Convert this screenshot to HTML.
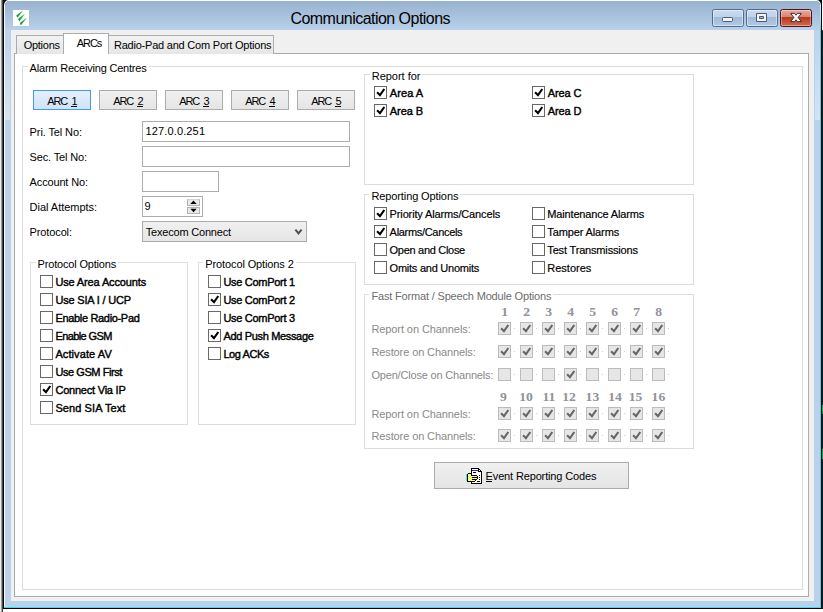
<!DOCTYPE html>
<html><head><meta charset="utf-8"><title>Communication Options</title>
<style>
html,body{margin:0;padding:0;background:#fff;}
body{width:823px;height:612px;position:relative;overflow:hidden;font-family:"Liberation Sans",sans-serif;}
#r div{position:absolute;}
svg{position:absolute;left:0;top:0;}
svg text{font-family:"Liberation Sans",sans-serif;white-space:pre;}
svg text.b{stroke:#000;stroke-width:.4px;}
svg text.m{stroke:#000;stroke-width:.18px;}
svg text.n{font-family:"Liberation Serif",serif;font-weight:bold;}
</style></head><body>
<div id="r">

<div style="left:0;top:0;width:823px;height:612px;background:#fff;"></div>
<div style="left:0;top:0;width:1px;height:612px;background:#ececec;"></div>
<div style="left:1px;top:0;width:1px;height:612px;background:#9c9c9c;"></div>
<div style="left:2px;top:0;width:1px;height:612px;background:#484848;"></div>
<div style="left:3px;top:0;width:819px;height:609px;background:#000;"></div>
<div style="left:4px;top:0;width:817px;height:608px;background:#b9d1ea;"></div>
<div style="left:4px;top:1px;width:817px;height:29px;background:linear-gradient(#97b2d0,#b9d1ea);"></div>
<div style="left:4px;top:0;width:817px;height:1px;background:#fff;"></div>
<div style="left:5px;top:30px;width:5px;height:90px;background:linear-gradient(rgba(255,255,255,.04),rgba(255,255,255,.4));"></div>
<div style="left:815px;top:30px;width:5px;height:90px;background:linear-gradient(rgba(255,255,255,.04),rgba(255,255,255,.4));"></div>
<div style="left:4px;top:1px;width:1px;height:606px;background:#f8fbfe;"></div>
<div style="left:820px;top:1px;width:1px;height:606px;background:#3cd8fa;"></div>
<div style="left:820px;top:1px;width:1px;height:30px;background:linear-gradient(#d0f6ff,#a8ecfd 50%,#3cd8fa);"></div>
<div style="left:822px;top:0;width:1px;height:30px;background:#fff;"></div>
<div style="left:822px;top:30px;width:1px;height:579px;background:#1c1c1c;"></div>
<div style="left:822px;top:405px;width:1px;height:9px;background:#18a048;"></div>
<div style="left:822px;top:449px;width:1px;height:10px;background:#18a048;"></div>
<div style="left:4px;top:607px;width:817px;height:1px;background:#38dcf8;"></div>

<div style="left:11px;top:30px;width:803px;height:571px;background:#f0f0f0;"></div>
<div style="left:14px;top:53px;width:795px;height:544px;background:#fff;border:1px solid #acacac;box-sizing:border-box;"></div>
<div style="left:16px;top:35px;width:48px;height:19px;background:linear-gradient(#f2f2f2,#e6e6e6);border:1px solid #acacac;border-bottom:none;box-sizing:border-box;"></div>
<div style="left:108px;top:35px;width:166px;height:19px;background:linear-gradient(#f2f2f2,#e6e6e6);border:1px solid #acacac;border-bottom:none;box-sizing:border-box;"></div>
<div style="left:63px;top:33px;width:46px;height:21px;background:#fff;border:1px solid #acacac;border-bottom:none;box-sizing:border-box;"></div>
<div style="left:22px;top:66px;width:781px;height:524px;border:1px solid #dcdcdc;box-sizing:border-box;"></div>
<div style="left:27.6px;top:66px;width:121.1px;height:1px;background:#fff;"></div>
<div style="left:33px;top:90px;width:58px;height:20px;background:linear-gradient(#e4f0fc,#cfe3f8);border:1px solid #4698ee;box-sizing:border-box;"></div>
<div style="left:71px;top:106px;width:6px;height:1px;background:#000;"></div>
<div style="left:99px;top:90px;width:58px;height:20px;background:linear-gradient(#f0f0f0,#e5e5e5);border:1px solid #acacac;box-sizing:border-box;"></div>
<div style="left:137px;top:106px;width:6px;height:1px;background:#000;"></div>
<div style="left:165px;top:90px;width:58px;height:20px;background:linear-gradient(#f0f0f0,#e5e5e5);border:1px solid #acacac;box-sizing:border-box;"></div>
<div style="left:203px;top:106px;width:6px;height:1px;background:#000;"></div>
<div style="left:231px;top:90px;width:58px;height:20px;background:linear-gradient(#f0f0f0,#e5e5e5);border:1px solid #acacac;box-sizing:border-box;"></div>
<div style="left:269px;top:106px;width:6px;height:1px;background:#000;"></div>
<div style="left:297px;top:90px;width:58px;height:20px;background:linear-gradient(#f0f0f0,#e5e5e5);border:1px solid #acacac;box-sizing:border-box;"></div>
<div style="left:335px;top:106px;width:6px;height:1px;background:#000;"></div>
<div style="left:142px;top:121px;width:208px;height:21px;background:#fff;border:1px solid #abadb3;box-sizing:border-box;"></div>
<div style="left:142px;top:146px;width:208px;height:21px;background:#fff;border:1px solid #abadb3;box-sizing:border-box;"></div>
<div style="left:142px;top:171px;width:77px;height:21px;background:#fff;border:1px solid #abadb3;box-sizing:border-box;"></div>
<div style="left:142px;top:196px;width:61px;height:21px;background:#fff;border:1px solid #abadb3;box-sizing:border-box;"></div>
<div style="left:187px;top:199px;width:13px;height:7px;background:#e9e9e9;border:1px solid #b2b2b2;border-top-color:#d4d4d4;box-sizing:border-box;"></div>
<div style="left:187px;top:207px;width:13px;height:7px;background:#e9e9e9;border:1px solid #b2b2b2;box-sizing:border-box;"></div>
<div style="left:142px;top:221px;width:165px;height:21px;background:linear-gradient(#f0f0f0,#e5e5e5);border:1px solid #acacac;box-sizing:border-box;"></div>
<div style="left:30px;top:262px;width:158px;height:163px;border:1px solid #dcdcdc;box-sizing:border-box;"></div>
<div style="left:35.6px;top:262px;width:82.6px;height:1px;background:#fff;"></div>
<div style="left:40px;top:275px;width:13px;height:13px;background:#fff;border:1px solid #686868;box-sizing:border-box;"></div>
<div style="left:40px;top:293px;width:13px;height:13px;background:#fff;border:1px solid #686868;box-sizing:border-box;"></div>
<div style="left:40px;top:311px;width:13px;height:13px;background:#fff;border:1px solid #686868;box-sizing:border-box;"></div>
<div style="left:40px;top:329px;width:13px;height:13px;background:#fff;border:1px solid #686868;box-sizing:border-box;"></div>
<div style="left:40px;top:347px;width:13px;height:13px;background:#fff;border:1px solid #686868;box-sizing:border-box;"></div>
<div style="left:40px;top:365px;width:13px;height:13px;background:#fff;border:1px solid #686868;box-sizing:border-box;"></div>
<div style="left:40px;top:383px;width:13px;height:13px;background:#fff;border:1px solid #686868;box-sizing:border-box;"></div>
<div style="left:40px;top:401px;width:13px;height:13px;background:#fff;border:1px solid #686868;box-sizing:border-box;"></div>
<div style="left:198px;top:262px;width:158px;height:163px;border:1px solid #dcdcdc;box-sizing:border-box;"></div>
<div style="left:203.3px;top:262px;width:92.5px;height:1px;background:#fff;"></div>
<div style="left:208px;top:275px;width:13px;height:13px;background:#fff;border:1px solid #686868;box-sizing:border-box;"></div>
<div style="left:208px;top:293px;width:13px;height:13px;background:#fff;border:1px solid #686868;box-sizing:border-box;"></div>
<div style="left:208px;top:311px;width:13px;height:13px;background:#fff;border:1px solid #686868;box-sizing:border-box;"></div>
<div style="left:208px;top:329px;width:13px;height:13px;background:#fff;border:1px solid #686868;box-sizing:border-box;"></div>
<div style="left:208px;top:347px;width:13px;height:13px;background:#fff;border:1px solid #686868;box-sizing:border-box;"></div>
<div style="left:364px;top:74px;width:330px;height:111px;border:1px solid #dcdcdc;box-sizing:border-box;"></div>
<div style="left:369.7px;top:74px;width:52.80000000000001px;height:1px;background:#fff;"></div>
<div style="left:374px;top:86px;width:13px;height:13px;background:#fff;border:1px solid #686868;box-sizing:border-box;"></div>
<div style="left:374px;top:104px;width:13px;height:13px;background:#fff;border:1px solid #686868;box-sizing:border-box;"></div>
<div style="left:532px;top:86px;width:13px;height:13px;background:#fff;border:1px solid #686868;box-sizing:border-box;"></div>
<div style="left:532px;top:104px;width:13px;height:13px;background:#fff;border:1px solid #686868;box-sizing:border-box;"></div>
<div style="left:364px;top:194px;width:330px;height:91px;border:1px solid #dcdcdc;box-sizing:border-box;"></div>
<div style="left:369.4px;top:194px;width:91.0px;height:1px;background:#fff;"></div>
<div style="left:374px;top:207px;width:13px;height:13px;background:#fff;border:1px solid #686868;box-sizing:border-box;"></div>
<div style="left:374px;top:225px;width:13px;height:13px;background:#fff;border:1px solid #686868;box-sizing:border-box;"></div>
<div style="left:374px;top:243px;width:13px;height:13px;background:#fff;border:1px solid #686868;box-sizing:border-box;"></div>
<div style="left:374px;top:261px;width:13px;height:13px;background:#fff;border:1px solid #686868;box-sizing:border-box;"></div>
<div style="left:532px;top:207px;width:13px;height:13px;background:#fff;border:1px solid #686868;box-sizing:border-box;"></div>
<div style="left:532px;top:225px;width:13px;height:13px;background:#fff;border:1px solid #686868;box-sizing:border-box;"></div>
<div style="left:532px;top:243px;width:13px;height:13px;background:#fff;border:1px solid #686868;box-sizing:border-box;"></div>
<div style="left:532px;top:261px;width:13px;height:13px;background:#fff;border:1px solid #686868;box-sizing:border-box;"></div>
<div style="left:364px;top:294px;width:330px;height:155px;border:1px solid #dcdcdc;box-sizing:border-box;"></div>
<div style="left:369.4px;top:294px;width:184.10000000000002px;height:1px;background:#fff;"></div>
<div style="left:498px;top:322px;width:13px;height:13px;background:#e6e6e6;border:1px solid #bcbcbc;box-sizing:border-box;"></div>
<div style="left:514px;top:328px;width:1px;height:1px;background:#c8c8ee;"></div>
<div style="left:520px;top:322px;width:13px;height:13px;background:#e6e6e6;border:1px solid #bcbcbc;box-sizing:border-box;"></div>
<div style="left:536px;top:328px;width:1px;height:1px;background:#c8c8ee;"></div>
<div style="left:542px;top:322px;width:13px;height:13px;background:#e6e6e6;border:1px solid #bcbcbc;box-sizing:border-box;"></div>
<div style="left:558px;top:328px;width:1px;height:1px;background:#c8c8ee;"></div>
<div style="left:564px;top:322px;width:13px;height:13px;background:#e6e6e6;border:1px solid #bcbcbc;box-sizing:border-box;"></div>
<div style="left:580px;top:328px;width:1px;height:1px;background:#c8c8ee;"></div>
<div style="left:586px;top:322px;width:13px;height:13px;background:#e6e6e6;border:1px solid #bcbcbc;box-sizing:border-box;"></div>
<div style="left:602px;top:328px;width:1px;height:1px;background:#c8c8ee;"></div>
<div style="left:608px;top:322px;width:13px;height:13px;background:#e6e6e6;border:1px solid #bcbcbc;box-sizing:border-box;"></div>
<div style="left:624px;top:328px;width:1px;height:1px;background:#c8c8ee;"></div>
<div style="left:630px;top:322px;width:13px;height:13px;background:#e6e6e6;border:1px solid #bcbcbc;box-sizing:border-box;"></div>
<div style="left:646px;top:328px;width:1px;height:1px;background:#c8c8ee;"></div>
<div style="left:652px;top:322px;width:13px;height:13px;background:#e6e6e6;border:1px solid #bcbcbc;box-sizing:border-box;"></div>
<div style="left:668px;top:328px;width:1px;height:1px;background:#c8c8ee;"></div>
<div style="left:498px;top:345px;width:13px;height:13px;background:#e6e6e6;border:1px solid #bcbcbc;box-sizing:border-box;"></div>
<div style="left:514px;top:351px;width:1px;height:1px;background:#c8c8ee;"></div>
<div style="left:520px;top:345px;width:13px;height:13px;background:#e6e6e6;border:1px solid #bcbcbc;box-sizing:border-box;"></div>
<div style="left:536px;top:351px;width:1px;height:1px;background:#c8c8ee;"></div>
<div style="left:542px;top:345px;width:13px;height:13px;background:#e6e6e6;border:1px solid #bcbcbc;box-sizing:border-box;"></div>
<div style="left:558px;top:351px;width:1px;height:1px;background:#c8c8ee;"></div>
<div style="left:564px;top:345px;width:13px;height:13px;background:#e6e6e6;border:1px solid #bcbcbc;box-sizing:border-box;"></div>
<div style="left:580px;top:351px;width:1px;height:1px;background:#c8c8ee;"></div>
<div style="left:586px;top:345px;width:13px;height:13px;background:#e6e6e6;border:1px solid #bcbcbc;box-sizing:border-box;"></div>
<div style="left:602px;top:351px;width:1px;height:1px;background:#c8c8ee;"></div>
<div style="left:608px;top:345px;width:13px;height:13px;background:#e6e6e6;border:1px solid #bcbcbc;box-sizing:border-box;"></div>
<div style="left:624px;top:351px;width:1px;height:1px;background:#c8c8ee;"></div>
<div style="left:630px;top:345px;width:13px;height:13px;background:#e6e6e6;border:1px solid #bcbcbc;box-sizing:border-box;"></div>
<div style="left:646px;top:351px;width:1px;height:1px;background:#c8c8ee;"></div>
<div style="left:652px;top:345px;width:13px;height:13px;background:#e6e6e6;border:1px solid #bcbcbc;box-sizing:border-box;"></div>
<div style="left:668px;top:351px;width:1px;height:1px;background:#c8c8ee;"></div>
<div style="left:498px;top:368px;width:13px;height:13px;background:#e6e6e6;border:1px solid #bcbcbc;box-sizing:border-box;"></div>
<div style="left:514px;top:374px;width:1px;height:1px;background:#c8c8ee;"></div>
<div style="left:520px;top:368px;width:13px;height:13px;background:#e6e6e6;border:1px solid #bcbcbc;box-sizing:border-box;"></div>
<div style="left:536px;top:374px;width:1px;height:1px;background:#c8c8ee;"></div>
<div style="left:542px;top:368px;width:13px;height:13px;background:#e6e6e6;border:1px solid #bcbcbc;box-sizing:border-box;"></div>
<div style="left:558px;top:374px;width:1px;height:1px;background:#c8c8ee;"></div>
<div style="left:564px;top:368px;width:13px;height:13px;background:#e6e6e6;border:1px solid #bcbcbc;box-sizing:border-box;"></div>
<div style="left:580px;top:374px;width:1px;height:1px;background:#c8c8ee;"></div>
<div style="left:586px;top:368px;width:13px;height:13px;background:#e6e6e6;border:1px solid #bcbcbc;box-sizing:border-box;"></div>
<div style="left:602px;top:374px;width:1px;height:1px;background:#c8c8ee;"></div>
<div style="left:608px;top:368px;width:13px;height:13px;background:#e6e6e6;border:1px solid #bcbcbc;box-sizing:border-box;"></div>
<div style="left:624px;top:374px;width:1px;height:1px;background:#c8c8ee;"></div>
<div style="left:630px;top:368px;width:13px;height:13px;background:#e6e6e6;border:1px solid #bcbcbc;box-sizing:border-box;"></div>
<div style="left:646px;top:374px;width:1px;height:1px;background:#c8c8ee;"></div>
<div style="left:652px;top:368px;width:13px;height:13px;background:#e6e6e6;border:1px solid #bcbcbc;box-sizing:border-box;"></div>
<div style="left:668px;top:374px;width:1px;height:1px;background:#c8c8ee;"></div>
<div style="left:498px;top:407px;width:13px;height:13px;background:#e6e6e6;border:1px solid #bcbcbc;box-sizing:border-box;"></div>
<div style="left:514px;top:413px;width:1px;height:1px;background:#c8c8ee;"></div>
<div style="left:520px;top:407px;width:13px;height:13px;background:#e6e6e6;border:1px solid #bcbcbc;box-sizing:border-box;"></div>
<div style="left:536px;top:413px;width:1px;height:1px;background:#c8c8ee;"></div>
<div style="left:542px;top:407px;width:13px;height:13px;background:#e6e6e6;border:1px solid #bcbcbc;box-sizing:border-box;"></div>
<div style="left:558px;top:413px;width:1px;height:1px;background:#c8c8ee;"></div>
<div style="left:564px;top:407px;width:13px;height:13px;background:#e6e6e6;border:1px solid #bcbcbc;box-sizing:border-box;"></div>
<div style="left:580px;top:413px;width:1px;height:1px;background:#c8c8ee;"></div>
<div style="left:586px;top:407px;width:13px;height:13px;background:#e6e6e6;border:1px solid #bcbcbc;box-sizing:border-box;"></div>
<div style="left:602px;top:413px;width:1px;height:1px;background:#c8c8ee;"></div>
<div style="left:608px;top:407px;width:13px;height:13px;background:#e6e6e6;border:1px solid #bcbcbc;box-sizing:border-box;"></div>
<div style="left:624px;top:413px;width:1px;height:1px;background:#c8c8ee;"></div>
<div style="left:630px;top:407px;width:13px;height:13px;background:#e6e6e6;border:1px solid #bcbcbc;box-sizing:border-box;"></div>
<div style="left:646px;top:413px;width:1px;height:1px;background:#c8c8ee;"></div>
<div style="left:652px;top:407px;width:13px;height:13px;background:#e6e6e6;border:1px solid #bcbcbc;box-sizing:border-box;"></div>
<div style="left:668px;top:413px;width:1px;height:1px;background:#c8c8ee;"></div>
<div style="left:498px;top:429px;width:13px;height:13px;background:#e6e6e6;border:1px solid #bcbcbc;box-sizing:border-box;"></div>
<div style="left:514px;top:435px;width:1px;height:1px;background:#c8c8ee;"></div>
<div style="left:520px;top:429px;width:13px;height:13px;background:#e6e6e6;border:1px solid #bcbcbc;box-sizing:border-box;"></div>
<div style="left:536px;top:435px;width:1px;height:1px;background:#c8c8ee;"></div>
<div style="left:542px;top:429px;width:13px;height:13px;background:#e6e6e6;border:1px solid #bcbcbc;box-sizing:border-box;"></div>
<div style="left:558px;top:435px;width:1px;height:1px;background:#c8c8ee;"></div>
<div style="left:564px;top:429px;width:13px;height:13px;background:#e6e6e6;border:1px solid #bcbcbc;box-sizing:border-box;"></div>
<div style="left:580px;top:435px;width:1px;height:1px;background:#c8c8ee;"></div>
<div style="left:586px;top:429px;width:13px;height:13px;background:#e6e6e6;border:1px solid #bcbcbc;box-sizing:border-box;"></div>
<div style="left:602px;top:435px;width:1px;height:1px;background:#c8c8ee;"></div>
<div style="left:608px;top:429px;width:13px;height:13px;background:#e6e6e6;border:1px solid #bcbcbc;box-sizing:border-box;"></div>
<div style="left:624px;top:435px;width:1px;height:1px;background:#c8c8ee;"></div>
<div style="left:630px;top:429px;width:13px;height:13px;background:#e6e6e6;border:1px solid #bcbcbc;box-sizing:border-box;"></div>
<div style="left:646px;top:435px;width:1px;height:1px;background:#c8c8ee;"></div>
<div style="left:652px;top:429px;width:13px;height:13px;background:#e6e6e6;border:1px solid #bcbcbc;box-sizing:border-box;"></div>
<div style="left:668px;top:435px;width:1px;height:1px;background:#c8c8ee;"></div>
<div style="left:434px;top:462px;width:195px;height:27px;background:linear-gradient(#f0f0f0,#e5e5e5);border:1px solid #acacac;box-sizing:border-box;"></div>
<div style="left:486px;top:481px;width:6px;height:1px;background:#000;"></div>
<div style="left:13px;top:10px;width:16px;height:16px;background:#fff;"></div>
<div style="left:712px;top:9px;width:32px;height:18px;border:1px solid #536c8d;border-radius:2.5px;box-sizing:border-box;background:linear-gradient(#c8dbef 0%,#bed3ea 44%,#9fbad9 47%,#b1cae5 100%);box-shadow:inset 0 0 0 1px rgba(255,255,255,.45);"></div>
<div style="left:746px;top:9px;width:32px;height:18px;border:1px solid #536c8d;border-radius:2.5px;box-sizing:border-box;background:linear-gradient(#c8dbef 0%,#bed3ea 44%,#9fbad9 47%,#b1cae5 100%);box-shadow:inset 0 0 0 1px rgba(255,255,255,.45);"></div>
<div style="left:780px;top:9px;width:32px;height:18px;border:1px solid #4a1420;border-radius:2.5px;box-sizing:border-box;background:linear-gradient(#e9ab9e 0%,#d98371 44%,#b8381c 47%,#d4694e 100%);box-shadow:inset 0 0 0 1px rgba(255,255,255,.35);"></div>
</div>
<svg width="823" height="612" viewBox="0 0 823 612">
<path d="M190.3 204 L193.5 200.6 L196.7 204 Z" fill="#000"/>
<path d="M190.3 208.8 L193.5 212.2 L196.7 208.8 Z" fill="#000"/>
<path d="M295.4 229.6 L298.5 233.4 L301.6 229.6" fill="none" stroke="#505050" stroke-width="2"/>
<path d="M43.1 389.2 L46 392.2 L50.3 386" fill="none" stroke="#000" stroke-width="2.1"/>
<path d="M211.1 299.2 L214 302.2 L218.3 296" fill="none" stroke="#000" stroke-width="2.1"/>
<path d="M211.1 335.2 L214 338.2 L218.3 332" fill="none" stroke="#000" stroke-width="2.1"/>
<path d="M377.1 92.2 L380 95.2 L384.3 89" fill="none" stroke="#000" stroke-width="2.1"/>
<path d="M377.1 110.2 L380 113.2 L384.3 107" fill="none" stroke="#000" stroke-width="2.1"/>
<path d="M535.1 92.2 L538 95.2 L542.3 89" fill="none" stroke="#000" stroke-width="2.1"/>
<path d="M535.1 110.2 L538 113.2 L542.3 107" fill="none" stroke="#000" stroke-width="2.1"/>
<path d="M377.1 213.2 L380 216.2 L384.3 210" fill="none" stroke="#000" stroke-width="2.1"/>
<path d="M377.1 231.2 L380 234.2 L384.3 228" fill="none" stroke="#000" stroke-width="2.1"/>
<path d="M501.1 328.2 L504 331.2 L508.3 325" fill="none" stroke="#666" stroke-width="2.1"/>
<path d="M523.1 328.2 L526 331.2 L530.3 325" fill="none" stroke="#666" stroke-width="2.1"/>
<path d="M545.1 328.2 L548 331.2 L552.3 325" fill="none" stroke="#666" stroke-width="2.1"/>
<path d="M567.1 328.2 L570 331.2 L574.3 325" fill="none" stroke="#666" stroke-width="2.1"/>
<path d="M589.1 328.2 L592 331.2 L596.3 325" fill="none" stroke="#666" stroke-width="2.1"/>
<path d="M611.1 328.2 L614 331.2 L618.3 325" fill="none" stroke="#666" stroke-width="2.1"/>
<path d="M633.1 328.2 L636 331.2 L640.3 325" fill="none" stroke="#666" stroke-width="2.1"/>
<path d="M655.1 328.2 L658 331.2 L662.3 325" fill="none" stroke="#666" stroke-width="2.1"/>
<path d="M501.1 351.2 L504 354.2 L508.3 348" fill="none" stroke="#666" stroke-width="2.1"/>
<path d="M523.1 351.2 L526 354.2 L530.3 348" fill="none" stroke="#666" stroke-width="2.1"/>
<path d="M545.1 351.2 L548 354.2 L552.3 348" fill="none" stroke="#666" stroke-width="2.1"/>
<path d="M567.1 351.2 L570 354.2 L574.3 348" fill="none" stroke="#666" stroke-width="2.1"/>
<path d="M589.1 351.2 L592 354.2 L596.3 348" fill="none" stroke="#666" stroke-width="2.1"/>
<path d="M611.1 351.2 L614 354.2 L618.3 348" fill="none" stroke="#666" stroke-width="2.1"/>
<path d="M633.1 351.2 L636 354.2 L640.3 348" fill="none" stroke="#666" stroke-width="2.1"/>
<path d="M655.1 351.2 L658 354.2 L662.3 348" fill="none" stroke="#666" stroke-width="2.1"/>
<path d="M567.1 374.2 L570 377.2 L574.3 371" fill="none" stroke="#666" stroke-width="2.1"/>
<path d="M501.1 413.2 L504 416.2 L508.3 410" fill="none" stroke="#666" stroke-width="2.1"/>
<path d="M523.1 413.2 L526 416.2 L530.3 410" fill="none" stroke="#666" stroke-width="2.1"/>
<path d="M545.1 413.2 L548 416.2 L552.3 410" fill="none" stroke="#666" stroke-width="2.1"/>
<path d="M567.1 413.2 L570 416.2 L574.3 410" fill="none" stroke="#666" stroke-width="2.1"/>
<path d="M589.1 413.2 L592 416.2 L596.3 410" fill="none" stroke="#666" stroke-width="2.1"/>
<path d="M611.1 413.2 L614 416.2 L618.3 410" fill="none" stroke="#666" stroke-width="2.1"/>
<path d="M633.1 413.2 L636 416.2 L640.3 410" fill="none" stroke="#666" stroke-width="2.1"/>
<path d="M655.1 413.2 L658 416.2 L662.3 410" fill="none" stroke="#666" stroke-width="2.1"/>
<path d="M501.1 435.2 L504 438.2 L508.3 432" fill="none" stroke="#666" stroke-width="2.1"/>
<path d="M523.1 435.2 L526 438.2 L530.3 432" fill="none" stroke="#666" stroke-width="2.1"/>
<path d="M545.1 435.2 L548 438.2 L552.3 432" fill="none" stroke="#666" stroke-width="2.1"/>
<path d="M567.1 435.2 L570 438.2 L574.3 432" fill="none" stroke="#666" stroke-width="2.1"/>
<path d="M589.1 435.2 L592 438.2 L596.3 432" fill="none" stroke="#666" stroke-width="2.1"/>
<path d="M611.1 435.2 L614 438.2 L618.3 432" fill="none" stroke="#666" stroke-width="2.1"/>
<path d="M633.1 435.2 L636 438.2 L640.3 432" fill="none" stroke="#666" stroke-width="2.1"/>
<path d="M655.1 435.2 L658 438.2 L662.3 432" fill="none" stroke="#666" stroke-width="2.1"/>
<rect x="471" y="468" width="1" height="1" fill="#000" shape-rendering="crispEdges"/>
<rect x="472" y="468" width="1" height="1" fill="#000" shape-rendering="crispEdges"/>
<rect x="473" y="468" width="1" height="1" fill="#000" shape-rendering="crispEdges"/>
<rect x="474" y="468" width="1" height="1" fill="#000" shape-rendering="crispEdges"/>
<rect x="475" y="468" width="1" height="1" fill="#000" shape-rendering="crispEdges"/>
<rect x="476" y="468" width="1" height="1" fill="#000" shape-rendering="crispEdges"/>
<rect x="477" y="468" width="1" height="1" fill="#000" shape-rendering="crispEdges"/>
<rect x="478" y="468" width="1" height="1" fill="#000" shape-rendering="crispEdges"/>
<rect x="471" y="469" width="1" height="1" fill="#000" shape-rendering="crispEdges"/>
<rect x="472" y="469" width="1" height="1" fill="#fff" shape-rendering="crispEdges"/>
<rect x="473" y="469" width="1" height="1" fill="#fff" shape-rendering="crispEdges"/>
<rect x="474" y="469" width="1" height="1" fill="#fff" shape-rendering="crispEdges"/>
<rect x="475" y="469" width="1" height="1" fill="#fff" shape-rendering="crispEdges"/>
<rect x="476" y="469" width="1" height="1" fill="#fff" shape-rendering="crispEdges"/>
<rect x="477" y="469" width="1" height="1" fill="#fff" shape-rendering="crispEdges"/>
<rect x="478" y="469" width="1" height="1" fill="#000" shape-rendering="crispEdges"/>
<rect x="479" y="469" width="1" height="1" fill="#000" shape-rendering="crispEdges"/>
<rect x="471" y="470" width="1" height="1" fill="#000" shape-rendering="crispEdges"/>
<rect x="472" y="470" width="1" height="1" fill="#2424ff" shape-rendering="crispEdges"/>
<rect x="473" y="470" width="1" height="1" fill="#2424ff" shape-rendering="crispEdges"/>
<rect x="474" y="470" width="1" height="1" fill="#2424ff" shape-rendering="crispEdges"/>
<rect x="475" y="470" width="1" height="1" fill="#2424ff" shape-rendering="crispEdges"/>
<rect x="476" y="470" width="1" height="1" fill="#2424ff" shape-rendering="crispEdges"/>
<rect x="477" y="470" width="1" height="1" fill="#2424ff" shape-rendering="crispEdges"/>
<rect x="478" y="470" width="1" height="1" fill="#000" shape-rendering="crispEdges"/>
<rect x="479" y="470" width="1" height="1" fill="#fff" shape-rendering="crispEdges"/>
<rect x="480" y="470" width="1" height="1" fill="#000" shape-rendering="crispEdges"/>
<rect x="471" y="471" width="1" height="1" fill="#000" shape-rendering="crispEdges"/>
<rect x="472" y="471" width="1" height="1" fill="#fff" shape-rendering="crispEdges"/>
<rect x="473" y="471" width="1" height="1" fill="#fff" shape-rendering="crispEdges"/>
<rect x="474" y="471" width="1" height="1" fill="#fff" shape-rendering="crispEdges"/>
<rect x="475" y="471" width="1" height="1" fill="#fff" shape-rendering="crispEdges"/>
<rect x="476" y="471" width="1" height="1" fill="#fff" shape-rendering="crispEdges"/>
<rect x="477" y="471" width="1" height="1" fill="#fff" shape-rendering="crispEdges"/>
<rect x="478" y="471" width="1" height="1" fill="#000" shape-rendering="crispEdges"/>
<rect x="479" y="471" width="1" height="1" fill="#000" shape-rendering="crispEdges"/>
<rect x="480" y="471" width="1" height="1" fill="#000" shape-rendering="crispEdges"/>
<rect x="481" y="471" width="1" height="1" fill="#000" shape-rendering="crispEdges"/>
<rect x="471" y="472" width="1" height="1" fill="#000" shape-rendering="crispEdges"/>
<rect x="472" y="472" width="1" height="1" fill="#fff" shape-rendering="crispEdges"/>
<rect x="473" y="472" width="1" height="1" fill="#000" shape-rendering="crispEdges"/>
<rect x="474" y="472" width="1" height="1" fill="#000" shape-rendering="crispEdges"/>
<rect x="475" y="472" width="1" height="1" fill="#000" shape-rendering="crispEdges"/>
<rect x="476" y="472" width="1" height="1" fill="#fff" shape-rendering="crispEdges"/>
<rect x="477" y="472" width="1" height="1" fill="#fff" shape-rendering="crispEdges"/>
<rect x="478" y="472" width="1" height="1" fill="#fff" shape-rendering="crispEdges"/>
<rect x="479" y="472" width="1" height="1" fill="#fff" shape-rendering="crispEdges"/>
<rect x="480" y="472" width="1" height="1" fill="#fff" shape-rendering="crispEdges"/>
<rect x="481" y="472" width="1" height="1" fill="#000" shape-rendering="crispEdges"/>
<rect x="468" y="473" width="1" height="1" fill="#000" shape-rendering="crispEdges"/>
<rect x="469" y="473" width="1" height="1" fill="#000" shape-rendering="crispEdges"/>
<rect x="470" y="473" width="1" height="1" fill="#000" shape-rendering="crispEdges"/>
<rect x="471" y="473" width="1" height="1" fill="#000" shape-rendering="crispEdges"/>
<rect x="472" y="473" width="1" height="1" fill="#fff" shape-rendering="crispEdges"/>
<rect x="473" y="473" width="1" height="1" fill="#fff" shape-rendering="crispEdges"/>
<rect x="474" y="473" width="1" height="1" fill="#fff" shape-rendering="crispEdges"/>
<rect x="475" y="473" width="1" height="1" fill="#fff" shape-rendering="crispEdges"/>
<rect x="476" y="473" width="1" height="1" fill="#fff" shape-rendering="crispEdges"/>
<rect x="477" y="473" width="1" height="1" fill="#fff" shape-rendering="crispEdges"/>
<rect x="478" y="473" width="1" height="1" fill="#fff" shape-rendering="crispEdges"/>
<rect x="479" y="473" width="1" height="1" fill="#fff" shape-rendering="crispEdges"/>
<rect x="480" y="473" width="1" height="1" fill="#fff" shape-rendering="crispEdges"/>
<rect x="481" y="473" width="1" height="1" fill="#000" shape-rendering="crispEdges"/>
<rect x="466" y="474" width="1" height="1" fill="#28e8fc" shape-rendering="crispEdges"/>
<rect x="467" y="474" width="1" height="1" fill="#000" shape-rendering="crispEdges"/>
<rect x="468" y="474" width="1" height="1" fill="#ffff00" shape-rendering="crispEdges"/>
<rect x="469" y="474" width="1" height="1" fill="#fff" shape-rendering="crispEdges"/>
<rect x="470" y="474" width="1" height="1" fill="#ffff00" shape-rendering="crispEdges"/>
<rect x="471" y="474" width="1" height="1" fill="#000" shape-rendering="crispEdges"/>
<rect x="472" y="474" width="1" height="1" fill="#fff" shape-rendering="crispEdges"/>
<rect x="473" y="474" width="1" height="1" fill="#fff" shape-rendering="crispEdges"/>
<rect x="474" y="474" width="1" height="1" fill="#fff" shape-rendering="crispEdges"/>
<rect x="475" y="474" width="1" height="1" fill="#fff" shape-rendering="crispEdges"/>
<rect x="476" y="474" width="1" height="1" fill="#fff" shape-rendering="crispEdges"/>
<rect x="477" y="474" width="1" height="1" fill="#fff" shape-rendering="crispEdges"/>
<rect x="478" y="474" width="1" height="1" fill="#fff" shape-rendering="crispEdges"/>
<rect x="479" y="474" width="1" height="1" fill="#fff" shape-rendering="crispEdges"/>
<rect x="480" y="474" width="1" height="1" fill="#fff" shape-rendering="crispEdges"/>
<rect x="481" y="474" width="1" height="1" fill="#000" shape-rendering="crispEdges"/>
<rect x="466" y="475" width="1" height="1" fill="#28e8fc" shape-rendering="crispEdges"/>
<rect x="467" y="475" width="1" height="1" fill="#000" shape-rendering="crispEdges"/>
<rect x="468" y="475" width="1" height="1" fill="#fff" shape-rendering="crispEdges"/>
<rect x="469" y="475" width="1" height="1" fill="#ffff00" shape-rendering="crispEdges"/>
<rect x="470" y="475" width="1" height="1" fill="#fff" shape-rendering="crispEdges"/>
<rect x="471" y="475" width="1" height="1" fill="#000" shape-rendering="crispEdges"/>
<rect x="472" y="475" width="1" height="1" fill="#000" shape-rendering="crispEdges"/>
<rect x="473" y="475" width="1" height="1" fill="#000" shape-rendering="crispEdges"/>
<rect x="474" y="475" width="1" height="1" fill="#000" shape-rendering="crispEdges"/>
<rect x="475" y="475" width="1" height="1" fill="#000" shape-rendering="crispEdges"/>
<rect x="476" y="475" width="1" height="1" fill="#000" shape-rendering="crispEdges"/>
<rect x="477" y="475" width="1" height="1" fill="#fff" shape-rendering="crispEdges"/>
<rect x="478" y="475" width="1" height="1" fill="#fff" shape-rendering="crispEdges"/>
<rect x="479" y="475" width="1" height="1" fill="#000" shape-rendering="crispEdges"/>
<rect x="480" y="475" width="1" height="1" fill="#fff" shape-rendering="crispEdges"/>
<rect x="481" y="475" width="1" height="1" fill="#000" shape-rendering="crispEdges"/>
<rect x="466" y="476" width="1" height="1" fill="#28e8fc" shape-rendering="crispEdges"/>
<rect x="467" y="476" width="1" height="1" fill="#000" shape-rendering="crispEdges"/>
<rect x="468" y="476" width="1" height="1" fill="#ffff00" shape-rendering="crispEdges"/>
<rect x="469" y="476" width="1" height="1" fill="#fff" shape-rendering="crispEdges"/>
<rect x="470" y="476" width="1" height="1" fill="#ffff00" shape-rendering="crispEdges"/>
<rect x="471" y="476" width="1" height="1" fill="#fff" shape-rendering="crispEdges"/>
<rect x="472" y="476" width="1" height="1" fill="#ffff00" shape-rendering="crispEdges"/>
<rect x="473" y="476" width="1" height="1" fill="#fff" shape-rendering="crispEdges"/>
<rect x="474" y="476" width="1" height="1" fill="#ffff00" shape-rendering="crispEdges"/>
<rect x="475" y="476" width="1" height="1" fill="#fff" shape-rendering="crispEdges"/>
<rect x="476" y="476" width="1" height="1" fill="#ffff00" shape-rendering="crispEdges"/>
<rect x="477" y="476" width="1" height="1" fill="#000" shape-rendering="crispEdges"/>
<rect x="478" y="476" width="1" height="1" fill="#fff" shape-rendering="crispEdges"/>
<rect x="479" y="476" width="1" height="1" fill="#fff" shape-rendering="crispEdges"/>
<rect x="480" y="476" width="1" height="1" fill="#fff" shape-rendering="crispEdges"/>
<rect x="481" y="476" width="1" height="1" fill="#000" shape-rendering="crispEdges"/>
<rect x="466" y="477" width="1" height="1" fill="#28e8fc" shape-rendering="crispEdges"/>
<rect x="467" y="477" width="1" height="1" fill="#000" shape-rendering="crispEdges"/>
<rect x="468" y="477" width="1" height="1" fill="#fff" shape-rendering="crispEdges"/>
<rect x="469" y="477" width="1" height="1" fill="#ffff00" shape-rendering="crispEdges"/>
<rect x="470" y="477" width="1" height="1" fill="#fff" shape-rendering="crispEdges"/>
<rect x="471" y="477" width="1" height="1" fill="#ffff00" shape-rendering="crispEdges"/>
<rect x="472" y="477" width="1" height="1" fill="#000" shape-rendering="crispEdges"/>
<rect x="473" y="477" width="1" height="1" fill="#000" shape-rendering="crispEdges"/>
<rect x="474" y="477" width="1" height="1" fill="#000" shape-rendering="crispEdges"/>
<rect x="475" y="477" width="1" height="1" fill="#000" shape-rendering="crispEdges"/>
<rect x="476" y="477" width="1" height="1" fill="#000" shape-rendering="crispEdges"/>
<rect x="477" y="477" width="1" height="1" fill="#000" shape-rendering="crispEdges"/>
<rect x="478" y="477" width="1" height="1" fill="#fff" shape-rendering="crispEdges"/>
<rect x="479" y="477" width="1" height="1" fill="#000" shape-rendering="crispEdges"/>
<rect x="480" y="477" width="1" height="1" fill="#fff" shape-rendering="crispEdges"/>
<rect x="481" y="477" width="1" height="1" fill="#000" shape-rendering="crispEdges"/>
<rect x="466" y="478" width="1" height="1" fill="#28e8fc" shape-rendering="crispEdges"/>
<rect x="467" y="478" width="1" height="1" fill="#000" shape-rendering="crispEdges"/>
<rect x="468" y="478" width="1" height="1" fill="#ffff00" shape-rendering="crispEdges"/>
<rect x="469" y="478" width="1" height="1" fill="#fff" shape-rendering="crispEdges"/>
<rect x="470" y="478" width="1" height="1" fill="#ffff00" shape-rendering="crispEdges"/>
<rect x="471" y="478" width="1" height="1" fill="#fff" shape-rendering="crispEdges"/>
<rect x="472" y="478" width="1" height="1" fill="#ffff00" shape-rendering="crispEdges"/>
<rect x="473" y="478" width="1" height="1" fill="#fff" shape-rendering="crispEdges"/>
<rect x="474" y="478" width="1" height="1" fill="#ffff00" shape-rendering="crispEdges"/>
<rect x="475" y="478" width="1" height="1" fill="#fff" shape-rendering="crispEdges"/>
<rect x="476" y="478" width="1" height="1" fill="#ffff00" shape-rendering="crispEdges"/>
<rect x="477" y="478" width="1" height="1" fill="#000" shape-rendering="crispEdges"/>
<rect x="478" y="478" width="1" height="1" fill="#fff" shape-rendering="crispEdges"/>
<rect x="479" y="478" width="1" height="1" fill="#fff" shape-rendering="crispEdges"/>
<rect x="480" y="478" width="1" height="1" fill="#fff" shape-rendering="crispEdges"/>
<rect x="481" y="478" width="1" height="1" fill="#000" shape-rendering="crispEdges"/>
<rect x="466" y="479" width="1" height="1" fill="#28e8fc" shape-rendering="crispEdges"/>
<rect x="467" y="479" width="1" height="1" fill="#000" shape-rendering="crispEdges"/>
<rect x="468" y="479" width="1" height="1" fill="#fff" shape-rendering="crispEdges"/>
<rect x="469" y="479" width="1" height="1" fill="#ffff00" shape-rendering="crispEdges"/>
<rect x="470" y="479" width="1" height="1" fill="#fff" shape-rendering="crispEdges"/>
<rect x="471" y="479" width="1" height="1" fill="#ffff00" shape-rendering="crispEdges"/>
<rect x="472" y="479" width="1" height="1" fill="#000" shape-rendering="crispEdges"/>
<rect x="473" y="479" width="1" height="1" fill="#000" shape-rendering="crispEdges"/>
<rect x="474" y="479" width="1" height="1" fill="#000" shape-rendering="crispEdges"/>
<rect x="475" y="479" width="1" height="1" fill="#000" shape-rendering="crispEdges"/>
<rect x="476" y="479" width="1" height="1" fill="#000" shape-rendering="crispEdges"/>
<rect x="477" y="479" width="1" height="1" fill="#fff" shape-rendering="crispEdges"/>
<rect x="478" y="479" width="1" height="1" fill="#fff" shape-rendering="crispEdges"/>
<rect x="479" y="479" width="1" height="1" fill="#000" shape-rendering="crispEdges"/>
<rect x="480" y="479" width="1" height="1" fill="#fff" shape-rendering="crispEdges"/>
<rect x="481" y="479" width="1" height="1" fill="#000" shape-rendering="crispEdges"/>
<rect x="466" y="480" width="1" height="1" fill="#28e8fc" shape-rendering="crispEdges"/>
<rect x="467" y="480" width="1" height="1" fill="#000" shape-rendering="crispEdges"/>
<rect x="468" y="480" width="1" height="1" fill="#ffff00" shape-rendering="crispEdges"/>
<rect x="469" y="480" width="1" height="1" fill="#fff" shape-rendering="crispEdges"/>
<rect x="470" y="480" width="1" height="1" fill="#ffff00" shape-rendering="crispEdges"/>
<rect x="471" y="480" width="1" height="1" fill="#fff" shape-rendering="crispEdges"/>
<rect x="472" y="480" width="1" height="1" fill="#ffff00" shape-rendering="crispEdges"/>
<rect x="473" y="480" width="1" height="1" fill="#fff" shape-rendering="crispEdges"/>
<rect x="474" y="480" width="1" height="1" fill="#ffff00" shape-rendering="crispEdges"/>
<rect x="475" y="480" width="1" height="1" fill="#000" shape-rendering="crispEdges"/>
<rect x="476" y="480" width="1" height="1" fill="#fff" shape-rendering="crispEdges"/>
<rect x="477" y="480" width="1" height="1" fill="#fff" shape-rendering="crispEdges"/>
<rect x="478" y="480" width="1" height="1" fill="#fff" shape-rendering="crispEdges"/>
<rect x="479" y="480" width="1" height="1" fill="#fff" shape-rendering="crispEdges"/>
<rect x="480" y="480" width="1" height="1" fill="#fff" shape-rendering="crispEdges"/>
<rect x="481" y="480" width="1" height="1" fill="#000" shape-rendering="crispEdges"/>
<rect x="467" y="481" width="1" height="1" fill="#000" shape-rendering="crispEdges"/>
<rect x="468" y="481" width="1" height="1" fill="#000" shape-rendering="crispEdges"/>
<rect x="469" y="481" width="1" height="1" fill="#000" shape-rendering="crispEdges"/>
<rect x="470" y="481" width="1" height="1" fill="#000" shape-rendering="crispEdges"/>
<rect x="471" y="481" width="1" height="1" fill="#000" shape-rendering="crispEdges"/>
<rect x="472" y="481" width="1" height="1" fill="#000" shape-rendering="crispEdges"/>
<rect x="473" y="481" width="1" height="1" fill="#000" shape-rendering="crispEdges"/>
<rect x="474" y="481" width="1" height="1" fill="#000" shape-rendering="crispEdges"/>
<rect x="475" y="481" width="1" height="1" fill="#fff" shape-rendering="crispEdges"/>
<rect x="476" y="481" width="1" height="1" fill="#fff" shape-rendering="crispEdges"/>
<rect x="477" y="481" width="1" height="1" fill="#000" shape-rendering="crispEdges"/>
<rect x="478" y="481" width="1" height="1" fill="#000" shape-rendering="crispEdges"/>
<rect x="479" y="481" width="1" height="1" fill="#000" shape-rendering="crispEdges"/>
<rect x="480" y="481" width="1" height="1" fill="#fff" shape-rendering="crispEdges"/>
<rect x="481" y="481" width="1" height="1" fill="#000" shape-rendering="crispEdges"/>
<rect x="471" y="482" width="1" height="1" fill="#000" shape-rendering="crispEdges"/>
<rect x="472" y="482" width="1" height="1" fill="#fff" shape-rendering="crispEdges"/>
<rect x="473" y="482" width="1" height="1" fill="#fff" shape-rendering="crispEdges"/>
<rect x="474" y="482" width="1" height="1" fill="#fff" shape-rendering="crispEdges"/>
<rect x="475" y="482" width="1" height="1" fill="#fff" shape-rendering="crispEdges"/>
<rect x="476" y="482" width="1" height="1" fill="#fff" shape-rendering="crispEdges"/>
<rect x="477" y="482" width="1" height="1" fill="#fff" shape-rendering="crispEdges"/>
<rect x="478" y="482" width="1" height="1" fill="#fff" shape-rendering="crispEdges"/>
<rect x="479" y="482" width="1" height="1" fill="#fff" shape-rendering="crispEdges"/>
<rect x="480" y="482" width="1" height="1" fill="#fff" shape-rendering="crispEdges"/>
<rect x="481" y="482" width="1" height="1" fill="#000" shape-rendering="crispEdges"/>
<rect x="471" y="483" width="1" height="1" fill="#000" shape-rendering="crispEdges"/>
<rect x="472" y="483" width="1" height="1" fill="#000" shape-rendering="crispEdges"/>
<rect x="473" y="483" width="1" height="1" fill="#000" shape-rendering="crispEdges"/>
<rect x="474" y="483" width="1" height="1" fill="#000" shape-rendering="crispEdges"/>
<rect x="475" y="483" width="1" height="1" fill="#000" shape-rendering="crispEdges"/>
<rect x="476" y="483" width="1" height="1" fill="#000" shape-rendering="crispEdges"/>
<rect x="477" y="483" width="1" height="1" fill="#000" shape-rendering="crispEdges"/>
<rect x="478" y="483" width="1" height="1" fill="#000" shape-rendering="crispEdges"/>
<rect x="479" y="483" width="1" height="1" fill="#000" shape-rendering="crispEdges"/>
<rect x="480" y="483" width="1" height="1" fill="#000" shape-rendering="crispEdges"/>
<rect x="481" y="483" width="1" height="1" fill="#000" shape-rendering="crispEdges"/>
<path d="M3 0 H8 Q4.5 0.5 4 5 L4 8 H3 Z" fill="#000"/>
<path d="M822 0 H817 Q820.5 0.5 821 5 L821 8 H822 Z" fill="#000"/>
<rect x="5" y="2" width="1" height="1" fill="#eef4fb"/><rect x="6" y="1" width="1" height="1" fill="#eef4fb"/>
<rect x="819" y="2" width="1" height="1" fill="#d4f6ff"/><rect x="818" y="1" width="1" height="1" fill="#d4f6ff"/>
<path d="M23.1 10.4 L16.2 15.4 L17.5 17.8 Z" fill="#15a238"/>
<path d="M24.9 13.8 L18.0 19.1 L19.4 21.5 Z" fill="#15a238"/>
<path d="M26.9 17.8 L19.8 23.1 L20.8 25.6 Z" fill="#15a238"/>
<rect x="722.5" y="17.5" width="10" height="4" rx="1" fill="#f4f4f4" stroke="#4a5a70" stroke-width="1"/>
<path d="M756.5 13.5 h10 v8 h-10 Z M759.5 16.5 v2 h4 v-2 Z" fill="#f4f4f4" fill-rule="evenodd" stroke="#4a5a70" stroke-width="1"/>
<path d="M790.6 13.4 L794.5 13.4 L796 15.2 L797.5 13.4 L801.4 13.4 L798.1 17.5 L801.4 21.6 L797.5 21.6 L796 19.8 L794.5 21.6 L790.6 21.6 L793.9 17.5 Z" fill="#f6f6f6" stroke="#43303a" stroke-width="1" stroke-linejoin="round"/>
<text x="23.7" y="48.5" font-size="11" fill="#000" textLength="36.3" lengthAdjust="spacing">Options</text>
<text x="76.8" y="47" font-size="11" fill="#000" textLength="25.5" lengthAdjust="spacing">ARCs</text>
<text x="113.9" y="48.5" font-size="11" fill="#000" textLength="157.7" lengthAdjust="spacing">Radio-Pad and Com Port Options</text>
<text x="29.6" y="71.8" font-size="11" fill="#000" textLength="117.1" lengthAdjust="spacing">Alarm Receiving Centres</text>
<text x="47.2" y="104.5" font-size="11" fill="#000" textLength="21.0" lengthAdjust="spacing">ARC</text>
<text x="71.5" y="104.5" font-size="11" fill="#000">1</text>
<text x="113.2" y="104.5" font-size="11" fill="#000" textLength="21.0" lengthAdjust="spacing">ARC</text>
<text x="137.5" y="104.5" font-size="11" fill="#000">2</text>
<text x="179.2" y="104.5" font-size="11" fill="#000" textLength="21.0" lengthAdjust="spacing">ARC</text>
<text x="203.5" y="104.5" font-size="11" fill="#000">3</text>
<text x="245.2" y="104.5" font-size="11" fill="#000" textLength="21.0" lengthAdjust="spacing">ARC</text>
<text x="269.5" y="104.5" font-size="11" fill="#000">4</text>
<text x="311.2" y="104.5" font-size="11" fill="#000" textLength="21.0" lengthAdjust="spacing">ARC</text>
<text x="335.5" y="104.5" font-size="11" fill="#000">5</text>
<text x="29.6" y="135.5" font-size="11" fill="#000" textLength="52.4" lengthAdjust="spacing">Pri. Tel No:</text>
<text x="29.6" y="160.5" font-size="11" fill="#000" textLength="57.4" lengthAdjust="spacing">Sec. Tel No:</text>
<text x="29.6" y="185.5" font-size="11" fill="#000" textLength="58.4" lengthAdjust="spacing">Account No:</text>
<text x="29.6" y="210.5" font-size="11" fill="#000" textLength="67.4" lengthAdjust="spacing">Dial Attempts:</text>
<text x="29.6" y="235.5" font-size="11" fill="#000" textLength="42.4" lengthAdjust="spacing">Protocol:</text>
<text x="145.5" y="134.5" font-size="11" fill="#000" textLength="59.5" lengthAdjust="spacing">127.0.0.251</text>
<text x="144.6" y="210" font-size="11" fill="#000">9</text>
<text x="145.8" y="235.5" font-size="11" fill="#000" textLength="85.2" lengthAdjust="spacing">Texecom Connect</text>
<text x="37.6" y="267.8" font-size="11" fill="#000" textLength="78.6" lengthAdjust="spacing">Protocol Options</text>
<text x="55.4" y="285.8" font-size="11" fill="#000" textLength="90.8" lengthAdjust="spacing" class="b">Use Area Accounts</text>
<text x="55.4" y="303.8" font-size="11" fill="#000" textLength="75.6" lengthAdjust="spacing" class="b">Use SIA I / UCP</text>
<text x="55.4" y="321.8" font-size="11" fill="#000" textLength="84.4" lengthAdjust="spacing" class="b">Enable Radio-Pad</text>
<text x="55.4" y="339.8" font-size="11" fill="#000" textLength="56.9" lengthAdjust="spacing" class="b">Enable GSM</text>
<text x="55.4" y="357.8" font-size="11" fill="#000" textLength="56.4" lengthAdjust="spacing" class="b">Activate AV</text>
<text x="55.4" y="375.8" font-size="11" fill="#000" textLength="66.9" lengthAdjust="spacing" class="b">Use GSM First</text>
<text x="55.4" y="393.8" font-size="11" fill="#000" textLength="70.4" lengthAdjust="spacing" class="b">Connect Via IP</text>
<text x="55.4" y="411.8" font-size="11" fill="#000" textLength="69.9" lengthAdjust="spacing" class="b">Send SIA Text</text>
<text x="205.3" y="267.8" font-size="11" fill="#000" textLength="88.5" lengthAdjust="spacing">Protocol Options 2</text>
<text x="223.4" y="285.8" font-size="11" fill="#000" textLength="71.7" lengthAdjust="spacing" class="b">Use ComPort 1</text>
<text x="223.4" y="303.8" font-size="11" fill="#000" textLength="71.7" lengthAdjust="spacing" class="b">Use ComPort 2</text>
<text x="223.4" y="321.8" font-size="11" fill="#000" textLength="71.7" lengthAdjust="spacing" class="b">Use ComPort 3</text>
<text x="223.4" y="339.8" font-size="11" fill="#000" textLength="90.4" lengthAdjust="spacing" class="b">Add Push Message</text>
<text x="223.4" y="357.8" font-size="11" fill="#000" textLength="45.9" lengthAdjust="spacing" class="b">Log ACKs</text>
<text x="371.7" y="79.8" font-size="11" fill="#000" textLength="48.8" lengthAdjust="spacing">Report for</text>
<text x="389.8" y="96.8" font-size="11" fill="#000" textLength="33.4" lengthAdjust="spacing" class="b">Area A</text>
<text x="389.8" y="114.8" font-size="11" fill="#000" textLength="33.4" lengthAdjust="spacing" class="b">Area B</text>
<text x="547.8000000000001" y="96.8" font-size="11" fill="#000" textLength="33.6" lengthAdjust="spacing" class="b">Area C</text>
<text x="547.8000000000001" y="114.8" font-size="11" fill="#000" textLength="33.6" lengthAdjust="spacing" class="b">Area D</text>
<text x="371.4" y="199.8" font-size="11" fill="#000" textLength="87.0" lengthAdjust="spacing">Reporting Options</text>
<text x="389.6" y="217.8" font-size="11" fill="#000" textLength="110.6" lengthAdjust="spacing" class="m">Priority Alarms/Cancels</text>
<text x="389.6" y="235.8" font-size="11" fill="#000" textLength="73.0" lengthAdjust="spacing" class="m">Alarms/Cancels</text>
<text x="389.6" y="253.8" font-size="11" fill="#000" textLength="75.6" lengthAdjust="spacing" class="m">Open and Close</text>
<text x="389.6" y="271.8" font-size="11" fill="#000" textLength="89.6" lengthAdjust="spacing" class="m">Omits and Unomits</text>
<text x="547.3000000000001" y="217.8" font-size="11" fill="#000" textLength="96.9" lengthAdjust="spacing" class="m">Maintenance Alarms</text>
<text x="547.3000000000001" y="235.8" font-size="11" fill="#000" textLength="71.9" lengthAdjust="spacing" class="m">Tamper Alarms</text>
<text x="547.3000000000001" y="253.8" font-size="11" fill="#000" textLength="90.7" lengthAdjust="spacing" class="m">Test Transmissions</text>
<text x="547.3000000000001" y="271.8" font-size="11" fill="#000" textLength="44.0" lengthAdjust="spacing" class="m">Restores</text>
<text x="371.4" y="299.8" font-size="11" fill="#6d6d6d" textLength="180.1" lengthAdjust="spacing">Fast Format / Speech Module Options</text>
<text x="371.4" y="332.5" font-size="11" fill="#8a8a8a" textLength="99.3" lengthAdjust="spacing">Report on Channels:</text>
<text x="371.4" y="355.5" font-size="11" fill="#8a8a8a" textLength="104.4" lengthAdjust="spacing">Restore on Channels:</text>
<text x="371.4" y="378.5" font-size="11" fill="#8a8a8a" textLength="122.0" lengthAdjust="spacing">Open/Close on Channels:</text>
<text x="371.4" y="417.5" font-size="11" fill="#8a8a8a" textLength="99.3" lengthAdjust="spacing">Report on Channels:</text>
<text x="371.4" y="439.5" font-size="11" fill="#8a8a8a" textLength="104.4" lengthAdjust="spacing">Restore on Channels:</text>
<text class="n" transform="translate(504.7,316) scale(1.14,1)" x="0" y="0" font-size="12" fill="#929298" text-anchor="middle">1</text>
<text class="n" transform="translate(526.7,316) scale(1.14,1)" x="0" y="0" font-size="12" fill="#929298" text-anchor="middle">2</text>
<text class="n" transform="translate(548.7,316) scale(1.14,1)" x="0" y="0" font-size="12" fill="#929298" text-anchor="middle">3</text>
<text class="n" transform="translate(570.7,316) scale(1.14,1)" x="0" y="0" font-size="12" fill="#929298" text-anchor="middle">4</text>
<text class="n" transform="translate(592.7,316) scale(1.14,1)" x="0" y="0" font-size="12" fill="#929298" text-anchor="middle">5</text>
<text class="n" transform="translate(614.7,316) scale(1.14,1)" x="0" y="0" font-size="12" fill="#929298" text-anchor="middle">6</text>
<text class="n" transform="translate(636.7,316) scale(1.14,1)" x="0" y="0" font-size="12" fill="#929298" text-anchor="middle">7</text>
<text class="n" transform="translate(658.7,316) scale(1.14,1)" x="0" y="0" font-size="12" fill="#929298" text-anchor="middle">8</text>
<text class="n" transform="translate(503.4,401) scale(1.14,1)" x="0" y="0" font-size="12" fill="#929298" text-anchor="middle">9</text>
<text class="n" transform="translate(526.1,401) scale(1.14,1)" x="0" y="0" font-size="12" fill="#929298" text-anchor="middle">10</text>
<text class="n" transform="translate(548.9,401) scale(1.14,1)" x="0" y="0" font-size="12" fill="#929298" text-anchor="middle">11</text>
<text class="n" transform="translate(569.1,401) scale(1.14,1)" x="0" y="0" font-size="12" fill="#929298" text-anchor="middle">12</text>
<text class="n" transform="translate(592.4,401) scale(1.14,1)" x="0" y="0" font-size="12" fill="#929298" text-anchor="middle">13</text>
<text class="n" transform="translate(615.1,401) scale(1.14,1)" x="0" y="0" font-size="12" fill="#929298" text-anchor="middle">14</text>
<text class="n" transform="translate(635.6,401) scale(1.14,1)" x="0" y="0" font-size="12" fill="#929298" text-anchor="middle">15</text>
<text class="n" transform="translate(658.4,401) scale(1.14,1)" x="0" y="0" font-size="12" fill="#929298" text-anchor="middle">16</text>
<text x="485.6" y="480.3" font-size="11" fill="#000" textLength="110.8" lengthAdjust="spacing">Event Reporting Codes</text>
<text x="290.4" y="24.2" font-size="16" fill="#000" textLength="160.2" lengthAdjust="spacing">Communication Options</text>
</svg>
</body></html>
